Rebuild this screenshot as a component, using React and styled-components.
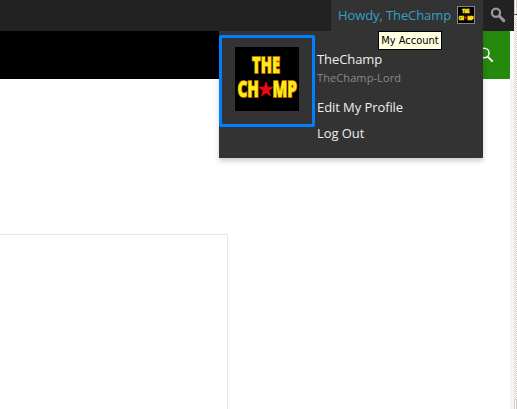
import React from "react";
import styled, { createGlobalStyle } from "styled-components";

const Global = createGlobalStyle`
  * { box-sizing: border-box; }
  body { margin: 0; background: #fff; font-family: "Open Sans", sans-serif; overflow: hidden; }
`;

const Screen = styled.div`
  display: flex;
  width: 517px;
  height: 409px;
`;

const Page = styled.div`
  display: flex;
  flex-direction: column;
  width: 514px;
  background: #fff;
`;

const AdminBar = styled.div`
  display: flex;
  justify-content: flex-end;
  height: 31px;
  background: #222;
`;

const Account = styled.div`
  position: relative;
  display: flex;
  align-items: flex-start;
  width: 152px;
  height: 31px;
  padding-left: 7px;
  background: #333;
`;

const Greeting = styled.span`
  width: 119px;
  font-size: 13px;
  line-height: 30px;
  letter-spacing: -0.1px;
  color: #33a0c8;
  white-space: nowrap;
`;

const SmallAvatar = styled.svg`
  width: 18px;
  height: 18px;
  margin-top: 6px;
  border: 1px solid #82878c;
  background: #000;
`;

const BarSearch = styled.div`
  display: flex;
  width: 31px;
  padding: 7px 0 0 7px;
`;

const Menu = styled.div`
  position: absolute;
  top: 31px;
  right: 0;
  display: flex;
  width: 264px;
  height: 127px;
  padding-top: 4px;
  background: #333;
  box-shadow: 0 3px 5px rgba(0, 0, 0, 0.2);
`;

const AvatarFrame = styled.div`
  width: 96px;
  height: 92px;
  padding: 9px 13px;
  border: 3px solid #0080ff;
  border-radius: 2px;
`;

const LargeAvatar = styled.svg`
  display: block;
  width: 64px;
  height: 64px;
  background: #000;
`;

const MenuLinks = styled.div`
  display: flex;
  flex-direction: column;
  padding: 14px 0 0 2px;
`;

const MenuLink = styled.span`
  height: ${(p) => p.$height}px;
  font-size: ${(p) => (p.$muted ? 11 : 13)}px;
  line-height: 20px;
  letter-spacing: ${(p) => (p.$muted ? 0.1 : -0.08)}px;
  color: ${(p) => (p.$muted ? "#8a8a8a" : "#eee")};
  white-space: nowrap;
`;

const Tooltip = styled.div`
  position: absolute;
  left: 47px;
  top: 31px;
  width: 64px;
  height: 19px;
  border: 1px solid #000;
  background: #ffffe1;
  color: #000;
  font: 11px/18px "DejaVu Sans Condensed", "DejaVu Sans", sans-serif;
  font-stretch: condensed;
  text-align: center;
  white-space: nowrap;
`;

const Header = styled.div`
  display: flex;
  justify-content: flex-end;
  width: 510px;
  height: 48px;
  background: #000;
`;

const HeaderSearch = styled.div`
  width: 48px;
  height: 48px;
  padding: 16px 0 0 16px;
  background: #24890d;
`;

const Body = styled.div`
  flex: 1;
  padding-top: 155px;
  border-right: 4px solid #f4f4f4;
`;

const ContentBox = styled.div`
  width: 228px;
  height: 175px;
  border: 1px solid #e5e5e5;
  border-width: 1px 1px 0 0;
  border-radius: 0 2px 0 0;
`;

const Scrollbar = styled.div`
  display: flex;
  flex-direction: column;
  justify-content: space-between;
  width: 3px;
  background: repeating-conic-gradient(#d4d0c8 0 25%, #fff 0 50%) 0 0 / 2px 2px;
`;

const ScrollButton = styled.div`
  height: ${(p) => p.$height}px;
  border-left: 1px solid #d4d0c8;
  border-top: ${(p) => (p.$end ? 1 : 0)}px solid #d4d0c8;
  border-bottom: ${(p) => (p.$end ? 0 : 1)}px solid #404040;
  background: linear-gradient(90deg, #fff 1px, #d4d0c8 1px);
`;

const LogoText = styled.text`
  font: 800 22px "Open Sans", sans-serif;
  fill: #ffeb18;
  stroke: ${(p) => (p.$small ? "#ffe600" : "#b86a00")};
  stroke-width: ${(p) => (p.$small ? 2.5 : 1.8)};
  paint-order: stroke;
`;

function Logo({ small }) {
  return (
    <>
      <rect width="64" height="64" fill="#000" />
      <LogoText $small={small} x="17" y="25.8" textLength="28" lengthAdjust="spacingAndGlyphs">THE</LogoText>
      <LogoText $small={small} x="2.5" y="50" textLength="21.5" lengthAdjust="spacingAndGlyphs">CH</LogoText>
      <LogoText $small={small} x="37.5" y="50" textLength="24.5" lengthAdjust="spacingAndGlyphs">MP</LogoText>
      <path d="M31 35l1.8 5.2h5.5l-4.5 3.3 1.7 5.5-4.5-3.3-4.5 3.3 1.7-5.5-4.5-3.3h5.5z" fill="#f5080c" stroke="#f5080c" strokeWidth=".7" />
    </>
  );
}

export default function App() {
  return (
    <>
      <Global />
      <Screen>
        <Page>
          <AdminBar>
            <Account>
              <Greeting>Howdy, TheChamp</Greeting>
              <SmallAvatar viewBox="0 0 64 64"><Logo small /></SmallAvatar>
              <Menu>
                <AvatarFrame>
                  <LargeAvatar viewBox="0 0 64 64"><Logo /></LargeAvatar>
                </AvatarFrame>
                <MenuLinks>
                  <MenuLink $height={19}>TheChamp</MenuLink>
                  <MenuLink $height={29} $muted>TheChamp-Lord</MenuLink>
                  <MenuLink $height={26}>Edit My Profile</MenuLink>
                  <MenuLink $height={20}>Log Out</MenuLink>
                </MenuLinks>
              </Menu>
              <Tooltip>My Account</Tooltip>
            </Account>
            <BarSearch>
              <svg width="17" height="17" viewBox="0 0 17 17" fill="none" stroke="#999">
                <circle cx="6" cy="5.8" r="4.1" strokeWidth="2.2" />
                <path d="M9.2 9l4.6 4.6" strokeWidth="3" strokeLinecap="round" />
              </svg>
            </BarSearch>
          </AdminBar>
          <Header>
            <HeaderSearch>
              <svg width="17" height="17" viewBox="0 0 17 17" fill="none" stroke="#fff">
                <circle cx="6.2" cy="6" r="4.8" strokeWidth="1.5" />
                <path d="M9.7 9.7l5 5" strokeWidth="1.9" />
              </svg>
            </HeaderSearch>
          </Header>
          <Body><ContentBox /></Body>
        </Page>
        <Scrollbar>
          <ScrollButton $height={15} />
          <ScrollButton $height={10} $end />
        </Scrollbar>
      </Screen>
    </>
  );
}
